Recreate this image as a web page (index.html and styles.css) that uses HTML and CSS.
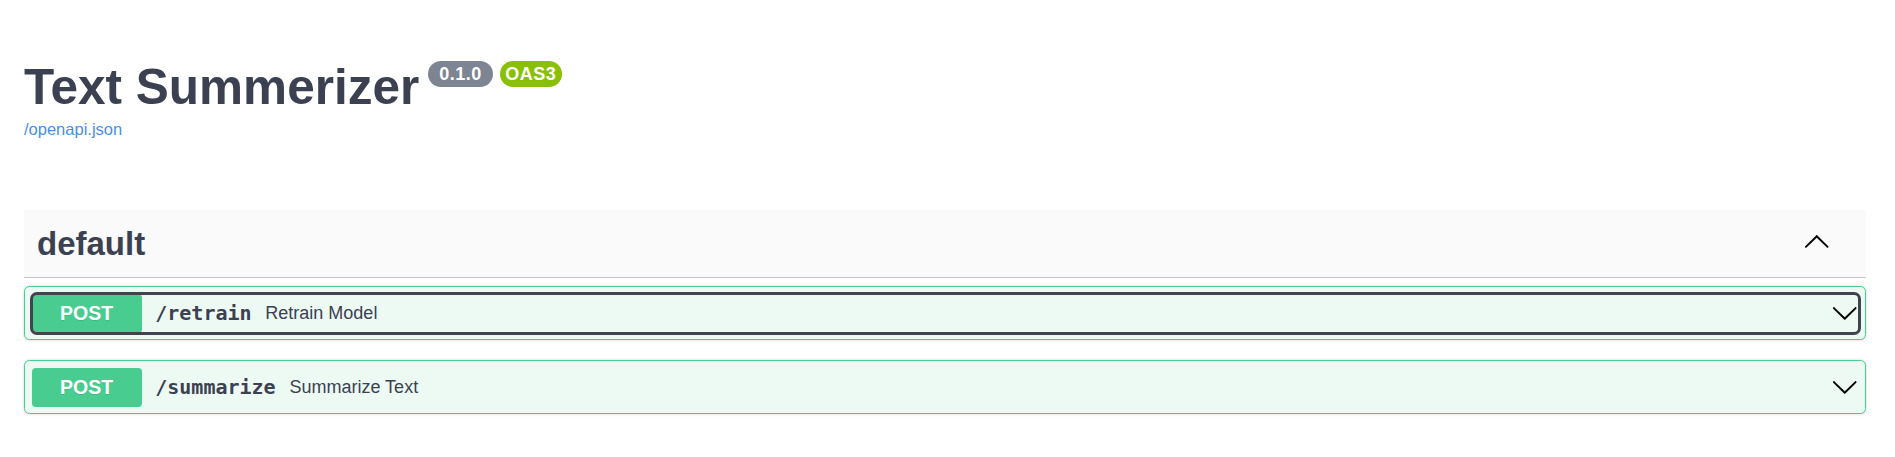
FILE: index.html
```html
<!DOCTYPE html>
<html lang="en">
<head>
<meta charset="utf-8">
<title>Text Summerizer - Swagger UI</title>
<link rel="stylesheet" href="styles.css">
</head>
<body>
<div class="wrapper">
  <div class="info">
    <div class="title-row">
      <h2 class="title">Text Summerizer</h2>
      <span class="badge badge-version"> 0.1.0 </span>
      <span class="badge badge-oas">OAS3</span>
    </div>
    <a class="url" href="#">/openapi.json</a>
  </div>

  <section class="tag-section">
    <div class="tag-header">
      <h3 class="tag-name">default</h3>
      <svg class="tag-arrow" viewBox="0 0 20 20" aria-hidden="true">
        <path d="M17.418 14.908c.272.268.709.268.979 0s.271-.701 0-.969l-7.908-7.83c-.27-.268-.707-.268-.979 0l-7.908 7.83c-.27.268-.27.701 0 .969.271.268.709.268.979 0L10 7.767l7.418 7.141z"/>
      </svg>
    </div>

    <div class="opblock">
      <div class="summary focused">
        <span class="method">POST</span>
        <span class="path">/retrain</span>
        <span class="desc">Retrain Model</span>
        <svg class="op-arrow" viewBox="0 0 20 20" aria-hidden="true">
          <path d="M17.418 6.109c.272-.268.709-.268.979 0s.271.701 0 .969l-7.908 7.83c-.27.268-.707.268-.979 0l-7.908-7.830c-.27-.268-.27-.701 0-.969.271-.268.709-.268.979 0L10 13.25l7.418-7.141z"/>
        </svg>
      </div>
    </div>

    <div class="opblock">
      <div class="summary">
        <span class="method">POST</span>
        <span class="path">/summarize</span>
        <span class="desc">Summarize Text</span>
        <svg class="op-arrow" viewBox="0 0 20 20" aria-hidden="true">
          <path d="M17.418 6.109c.272-.268.709-.268.979 0s.271.701 0 .969l-7.908 7.83c-.27.268-.707.268-.979 0l-7.908-7.83c-.27-.268-.27-.701 0-.969.271-.268.709-.268.979 0L10 13.25l7.418-7.141z"/>
        </svg>
      </div>
    </div>
  </section>
</div>
</body>
</html>
```

FILE: styles.css
```css
body {
  margin: 0;
  background: #ffffff;
  font-family: "Liberation Sans", Arial, sans-serif;
  color: #3b4151;
}

.wrapper {
  padding: 0 29px 0 24px;
}

.info {
  padding-top: 58px;
}

.title-row {
  display: flex;
  align-items: flex-start;
}

.title {
  margin: 0;
  font-size: 49.5px;
  line-height: 57px;
  font-weight: 700;
  color: #3b4151;
}

.badge {
  margin-top: 3px;
  height: 26px;
  line-height: 26px;
  padding: 0 5.5px;
  border-radius: 13px;
  font-size: 18px;
  font-weight: 700;
  letter-spacing: 0.5px;
  color: #ffffff;
  white-space: pre;
}

.badge-version {
  margin-left: 9px;
  background: #7d8492;
}

.badge-oas {
  margin-left: 7px;
  background: #89bf04;
}

.url {
  display: block;
  margin-top: 5px;
  font-size: 16.5px;
  line-height: 19px;
  color: #4990e2;
  text-decoration: none;
}

.tag-section {
  margin-top: 71px;
}

.tag-header {
  display: flex;
  align-items: center;
  height: 67px;
  padding: 0 35.5px 0 13px;
  background: #fafafa;
  border-bottom: 1px solid #c4c6cb;
  margin-bottom: 8px;
}

.tag-name {
  flex: 1;
  margin: 0;
  font-size: 33px;
  line-height: 1.15;
  font-weight: 700;
  color: #3b4151;
}

.tag-arrow {
  width: 27.5px;
  height: 27.5px;
  margin-top: -5px;
  fill: #000000;
  flex: none;
}

.opblock {
  border: 1px solid #49cc90;
  border-radius: 5.5px;
  background: #edfaf4;
  box-shadow: 0 0 3px rgba(0, 0, 0, 0.19);
  margin-bottom: 20px;
  padding: 6.5px;
}

.summary {
  display: flex;
  align-items: center;
  border-radius: 5px;
}

.summary.focused {
  outline: 3px solid #41444e;
  outline-offset: -1.5px;
}

.method {
  flex: none;
  width: 110px;
  height: 39px;
  line-height: 39px;
  text-align: center;
  background: #49cc90;
  color: #ffffff;
  border-radius: 4px;
  font-size: 19.5px;
  font-weight: 700;
  text-shadow: 0 1px 0 rgba(0, 0, 0, 0.1);
}

.path {
  font-family: "DejaVu Sans Mono", "Liberation Mono", monospace;
  font-size: 20px;
  font-weight: 700;
  padding: 0 13.75px;
  color: #3b4151;
}

.desc {
  flex: 1;
  font-size: 18px;
  color: #3b4151;
}

.op-arrow {
  flex: none;
  width: 27.5px;
  height: 27.5px;
  fill: #000000;
}
```
